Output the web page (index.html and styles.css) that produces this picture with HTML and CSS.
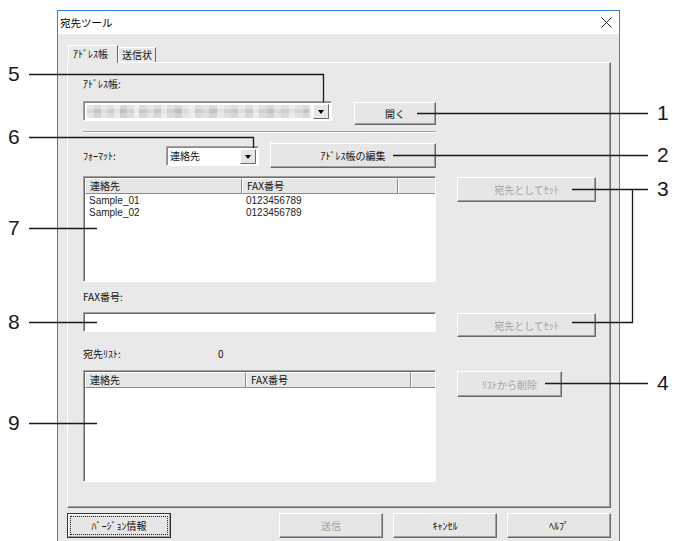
FILE: index.html
```html
<!DOCTYPE html>
<html lang="ja">
<head>
    <meta charset="UTF-8">
    <meta name="viewport" content="width=device-width, initial-scale=1.0">
    <title>宛先ツール</title>

    <link rel="stylesheet" href="styles.css">
</head>
<body>
<div class="page">
    <div class="dialog">
        <div class="titlebar">
            <span class="title">宛先ツール</span>
            <svg class="close" width="11" height="11" viewBox="0 0 11 11">
                <path d="M0.5 0.5 L10.5 10.5 M10.5 0.5 L0.5 10.5" stroke="#222" stroke-width="1" fill="none"/>
            </svg>
        </div>

        <div class="dialog-body">
            <div class="tabs">
                <div class="tab active">ｱﾄﾞﾚｽ帳</div>
                <div class="tab">送信状</div>
            </div>

            <div class="panel">
                <div class="label">ｱﾄﾞﾚｽ帳:</div>
                <div class="row row-book">
                    <div class="combo combo-book">
                        <div class="blur"></div>
                        <div class="drop"></div>
                    </div>
                    <button class="btn btn-open">開く</button>
                </div>

                <div class="sep"></div>

                <div class="row row-format">
                    <span class="label label-format">ﾌｫｰﾏｯﾄ:</span>
                    <div class="combo combo-format">
                        <span class="combo-text">連絡先</span>
                        <div class="drop"></div>
                    </div>
                    <button class="btn btn-edit">ｱﾄﾞﾚｽ帳の編集</button>
                </div>

                <div class="row row-list">
                    <div class="list list-contacts">
                        <div class="list-head">
                            <span class="col col-a">連絡先</span>
                            <span class="col col-b">FAX番号</span>
                            <span class="col col-c"></span>
                        </div>
                        <div class="list-row">
                            <span class="col col-a">Sample_01</span>
                            <span class="col col-b">0123456789</span>
                        </div>
                        <div class="list-row">
                            <span class="col col-a">Sample_02</span>
                            <span class="col col-b">0123456789</span>
                        </div>
                    </div>
                    <button class="btn btn-side" disabled>宛先としてｾｯﾄ</button>
                </div>

                <div class="label label-fax">FAX番号:</div>
                <div class="row row-fax">
                    <div class="input"></div>
                    <button class="btn btn-side btn-fax" disabled>宛先としてｾｯﾄ</button>
                </div>

                <div class="label label-dest">
                    <span class="dest-name">宛先ﾘｽﾄ:</span>
                    <span>0</span>
                </div>
                <div class="row row-dest">
                    <div class="list list-dest">
                        <div class="list-head">
                            <span class="col col-a">連絡先</span>
                            <span class="col col-b">FAX番号</span>
                            <span class="col col-c"></span>
                        </div>
                    </div>
                    <button class="btn btn-remove" disabled>ﾘｽﾄから削除</button>
                </div>
            </div>

            <div class="footer">
                <button class="btn btn-foot btn-default"><span class="focus">ﾊﾞｰｼﾞｮﾝ情報</span></button>
                <button class="btn btn-foot btn-send" disabled>送信</button>
                <button class="btn btn-foot">ｷｬﾝｾﾙ</button>
                <button class="btn btn-foot">ﾍﾙﾌﾟ</button>
            </div>
        </div>
    </div>

    <!-- callout lines over the screenshot -->
    <svg class="callouts" width="673" height="541" viewBox="0 0 673 541">
        <g stroke="#1a1a1a" stroke-width="1.3" fill="none">
            <path d="M29 74.5 H323.5 V102"/>
            <path d="M29 137.5 H253.5 V148"/>
            <path d="M29 228.5 H97"/>
            <path d="M29 322.5 H97"/>
            <path d="M29 423.5 H97"/>
            <path d="M417 113.5 H648"/>
            <path d="M393 155.5 H648"/>
            <path d="M572 189.5 H648"/>
            <path d="M632.5 189.5 V322.5 H572"/>
            <path d="M545 383.5 H648"/>
        </g>
    </svg>
    <span class="num left n5">5</span>
    <span class="num left n6">6</span>
    <span class="num left n7">7</span>
    <span class="num left n8">8</span>
    <span class="num left n9">9</span>
    <span class="num right n1">1</span>
    <span class="num right n2">2</span>
    <span class="num right n3">3</span>
    <span class="num right n4">4</span>
</div>
</body>
</html>
```

FILE: styles.css
```css
*{
    box-sizing: border-box;
}
body{
    margin: 0;
    background: #fff;
    font-family: "Liberation Sans", "Noto Sans CJK JP", sans-serif;
    font-size: 10px;
    color: #111;
}
.page{
    position: relative;
    width: 673px;
    height: 541px;
    overflow: hidden;
    background: #fff;
}
.dialog{
    margin: 10px 0 0 57px;
    width: 563px;
    height: 560px;
    border: 1px solid #3583cf;
    border-bottom: none;
    background: #e9e9e9;
}
.titlebar{
    height: 23px;
    background: #fff;
    display: flex;
    align-items: center;
    justify-content: space-between;
    padding: 0 7px 0 2px;
}
.title{
    font-family: "Noto Sans CJK JP", sans-serif;
    font-size: 10.5px;
    color: #000;
}
.dialog-body{
    padding: 11px 8px 0 9px;
}

/* tabs */
.tabs{
    display: flex;
    align-items: flex-end;
    height: 17px;
    padding-left: 1px;
}
.tab{
    height: 15px;
    padding: 0 0 0 3px;
    line-height: 14px;
    white-space: nowrap;
    border: 1px solid;
    border-color: #fff #696969 transparent #fff;
    border-bottom: none;
    font-family: "Noto Sans CJK JP", sans-serif;
}
.tab.active{
    position: relative;
    z-index: 1;
    height: 18px;
    width: 50px;
    margin-bottom: -1px;
    padding-left: 4px;
    line-height: 15px;
    background: #e9e9e9;
}
.tab:not(.active){
    width: 38px;
}

/* panel */
.panel{
    height: 446px;
    border: 1px solid;
    border-color: #fff #696969 #696969 #fff;
    box-shadow: inset -1px -1px #a0a0a0;
    padding: 15px 0 0 15px;
}
.label{
    height: 12px;
    line-height: 12px;
    font-family: "Noto Sans CJK JP", sans-serif;
}
.row{
    display: flex;
    align-items: flex-start;
}

/* buttons */
.btn{
    font-family: "Noto Sans CJK JP", sans-serif;
    font-size: 10px;
    color: #111;
    background: #e6e6e6;
    border: 1px solid;
    border-color: #fff #696969 #696969 #fff;
    box-shadow: inset -1px -1px #a0a0a0;
    padding: 0;
    margin: 0;
}
.btn:disabled{
    color: #a3a3a3;
}

/* combobox */
.combo{
    display: flex;
    align-items: stretch;
    height: 20px;
    background: #fff;
    border: 1px solid;
    border-color: #a0a0a0 #fff #fff #a0a0a0;
    box-shadow: inset 1px 1px #8a8a8a;
    padding: 2px 2px 1px 2px;
}
.drop{
    width: 16px;
    margin-left: auto;
    background: #e6e6e6;
    border: 1px solid;
    border-color: #fff #696969 #696969 #fff;
    display: flex;
    align-items: center;
    justify-content: center;
}
.drop::after{
    content: "";
    border-left: 3.5px solid transparent;
    border-right: 3.5px solid transparent;
    border-top: 4px solid #000;
    margin-top: 1px;
}
.row-book{
    margin-top: 11px;
}
.combo-book{
    width: 249px;
}
.blur{
    flex: 1;
    margin: 1px 2px 1px 1px;
    background:
        linear-gradient(180deg, rgba(255,255,255,0.35) 0 4px, rgba(255,255,255,0) 4px 8px, rgba(255,255,255,0.25) 8px),
        linear-gradient(90deg, #d9d9d9 0 7px, #c6c6c6 7px 14px, #dedede 14px 20px, #cfcfcf 20px 27px,
            #e4e4e4 27px 33px, #c2c2c2 33px 40px, #d4d4d4 40px 47px, #ebebeb 47px 52px,
            #cacaca 52px 60px, #dadada 60px 67px, #c8c8c8 67px 74px, #e6e6e6 74px 80px,
            #d0d0d0 80px 88px, #bfbfbf 88px 95px, #dcdcdc 95px 102px, #e8e8e8 102px 108px,
            #cdcdcd 108px 115px, #d7d7d7 115px 122px, #c4c4c4 122px 130px, #e2e2e2 130px 137px,
            #d3d3d3 137px 144px, #c9c9c9 144px 151px, #dfdfdf 151px 158px, #cbcbcb 158px 166px,
            #e5e5e5 166px 172px, #d1d1d1 172px 180px, #c3c3c3 180px 187px, #dbdbdb 187px 194px,
            #cecece 194px 202px, #e3e3e3 202px 208px, #d6d6d6 208px 216px, #c7c7c7 216px 222px, #dcdcdc 222px);
}
.btn-open{
    width: 82px;
    height: 23px;
    margin: 1px 0 0 22px;
}

.sep{
    width: 353px;
    margin-top: 6px;
    border-top: 1px solid #a0a0a0;
    border-bottom: 1px solid #fff;
}

.row-format{
    margin-top: 10px;
    align-items: center;
    height: 25px;
}
.label-format{
    width: 83px;
}
.combo-format{
    width: 93px;
}
.combo-text{
    font-family: "Noto Sans CJK JP", sans-serif;
    line-height: 14px;
    padding-left: 1px;
}
.btn-edit{
    width: 166px;
    height: 25px;
    margin-left: 11px;
}

/* list views */
.row-list{
    margin-top: 8px;
}
.list{
    width: 353px;
    background: #fff;
    border: 1px solid;
    border-color: #a0a0a0 #fff #fff #a0a0a0;
    box-shadow: inset 1px 1px #696969;
    padding: 1px 0 0 1px;
}
.list-contacts{
    height: 106px;
}
.list-dest{
    height: 112px;
}
.list-head{
    display: flex;
    height: 16px;
    background: #e6e6e6;
}
.list-head .col{
    border: 1px solid;
    border-color: #fff #8a8a8a #8a8a8a #fff;
    line-height: 13px;
    font-family: "Noto Sans CJK JP", sans-serif;
}
.col{
    padding-left: 4px;
    white-space: nowrap;
}
.list-contacts .col-a{
    width: 157px;
}
.list-contacts .col-b{
    width: 156px;
}
.list-dest .col-a{
    width: 161px;
}
.list-dest .col-b{
    width: 165px;
}
.list-head .col-c{
    flex: 1;
    border-right: none;
}
.list-row{
    display: flex;
    height: 11.5px;
    line-height: 11px;
    color: #222;
}
.list-head + .list-row{
    margin-top: 1px;
}
.btn-side{
    width: 139px;
    height: 25px;
    margin: 1px 0 0 21px;
}

.label-fax{
    margin-top: 9px;
}
.row-fax{
    margin-top: 9px;
}
.input{
    width: 353px;
    height: 20px;
    background: #fff;
    border: 1px solid;
    border-color: #a0a0a0 #fff #fff #a0a0a0;
    box-shadow: inset 1px 1px #696969;
}
.btn-fax{
    height: 24px;
}

.label-dest{
    margin-top: 11px;
    display: flex;
}
.dest-name{
    width: 135px;
}
.row-dest{
    margin-top: 10px;
}
.btn-remove{
    width: 105px;
    height: 26px;
    margin: 1px 0 0 21px;
}

/* bottom buttons */
.footer{
    display: flex;
    gap: 10px;
    margin-top: 5px;
}
.btn-foot{
    width: 104px;
    height: 25px;
}
.btn-default{
    border: 1px solid #333;
    padding: 2px;
    box-shadow: inset -1px -1px #a0a0a0, inset 1px 1px #fff;
}
.focus{
    display: flex;
    align-items: center;
    justify-content: center;
    height: 100%;
    outline: 1px dotted #222;
    outline-offset: -1px;
}
.btn-send{
    margin-left: auto;
}

/* callouts */
.callouts{
    position: absolute;
    left: 0;
    top: 0;
}
.num{
    position: absolute;
    font-family: "Liberation Sans", Arial, sans-serif;
    font-size: 21px;
    line-height: 20px;
    color: #1a1a1a;
}
.num.left{
    left: 8px;
}
.num.right{
    left: 657px;
}
.n5{ top: 64px; }
.n6{ top: 127px; }
.n7{ top: 218px; }
.n8{ top: 312px; }
.n9{ top: 413px; }
.n1{ top: 103px; }
.n2{ top: 145px; }
.n3{ top: 179px; }
.n4{ top: 373px; }
```
